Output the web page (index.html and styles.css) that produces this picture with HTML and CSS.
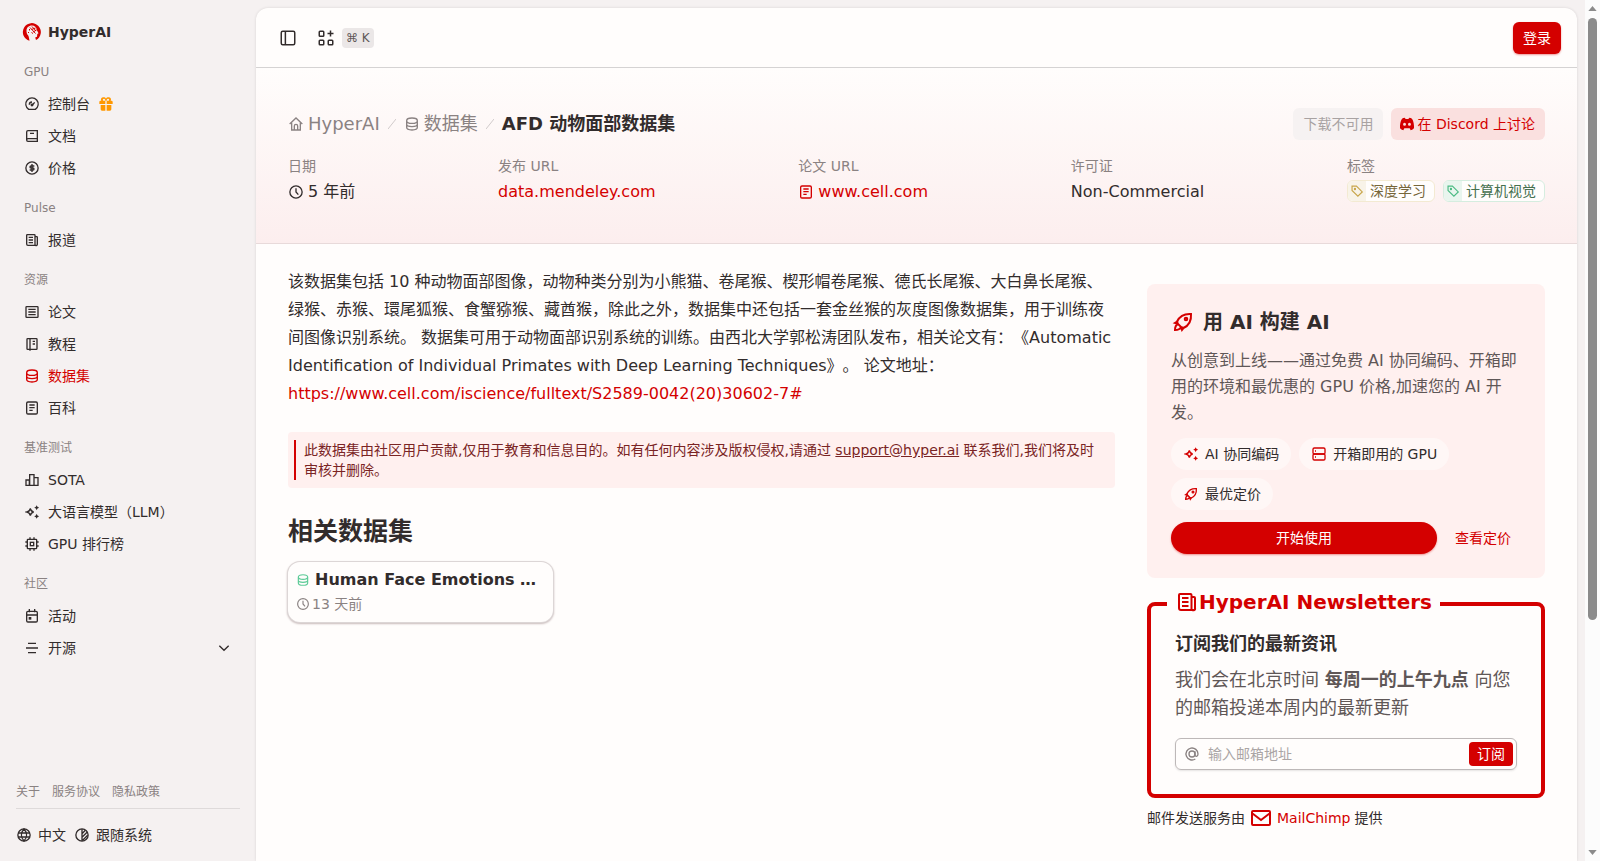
FILE: index.html
```html
<!DOCTYPE html>
<html lang="zh-CN">
<head>
<meta charset="utf-8">
<meta name="viewport" content="width=device-width, initial-scale=1">
<title>AFD 动物面部数据集</title>
<link rel="stylesheet" href="styles.css">
</head>
<body>
<svg class="sprite" aria-hidden="true">
  <symbol id="gauge" viewBox="0 0 24 24"><path d="M7 20h10a9.300 9.300 0 1 0-10 0z"/><path d="M12.500 13.500l3.500-4M8 13a4 4 0 0 1 4-4"/><circle cx="12" cy="13.500" r="1.200"/></symbol>
  <symbol id="book" viewBox="0 0 24 24"><path d="M4 6a2 2 0 0 1 2-2h14v16H6a2 2 0 0 1-2-2zM4 18a2 2 0 0 1 2-2h14M9 8h6"/></symbol>
  <symbol id="dollar" viewBox="0 0 24 24"><circle cx="12" cy="12" r="9.200"/><path d="M15.500 9H10.500a1.500 1.500 0 0 0 0 3h3a1.500 1.500 0 0 1 0 3H8.500M12 6v12"/></symbol>
  <symbol id="news" viewBox="0 0 24 24"><path d="M16.500 20V5a1 1 0 0 0-1-1H5a1 1 0 0 0-1 1v13a2 2 0 0 0 2 2h12.500M16.500 7H19a1 1 0 0 1 1 1v10a1.800 1.800 0 0 1-3.500 1M7 8h6.500M7 12h6.500M7 16h6.500"/></symbol>
  <symbol id="article" viewBox="0 0 24 24"><rect x="3" y="4" width="18" height="16" rx="1"/><path d="M6.500 8h11M6.500 12h11M6.500 16h11"/></symbol>
  <symbol id="notebook" viewBox="0 0 24 24"><rect x="4.500" y="4" width="15" height="16" rx="1"/><path d="M9 3v19M13 8h3.500M13 12h3.500"/></symbol>
  <symbol id="db" viewBox="0 0 24 24"><path d="M4 7c0-2.500 3-4 8-4s8 1.500 8 4-3 4-8 4-8-1.500-8-4v10c0 2.500 3 4 8 4s8-1.500 8-4V7M4 12.500c0 2 3 3.500 8 3.500s8-1.500 8-3.500"/></symbol>
  <symbol id="doc" viewBox="0 0 24 24"><rect x="4" y="3" width="16" height="18" rx="2"/><path d="M8 7.500h8M8 11.500h8M8 15.500h5"/></symbol>
  <symbol id="bars" viewBox="0 0 24 24"><path d="M3 12h5v8H3zM8.500 4h6.500v16H8.500zM15 8.500h6V20h-6z"/></symbol>
  <symbol id="spark" viewBox="0 0 24 24"><path d="M9.500 6.500c.8 3.800 2 5 5 5.500-3 .7-4.200 1.700-5 5.500-.8-3.800-2-4.800-5-5.500 3-.5 4.200-1.700 5-5.500z"/><path d="M2 12h3"/><path class="solid" d="M19 1.800l1.200 2.500L22.700 5.500l-2.500 1.200L19 9.200l-1.200-2.500-2.500-1.200 2.500-1.200zM19 14.800l1.200 2.500 2.500 1.200-2.500 1.200L19 22.200l-1.200-2.500-2.500-1.200 2.500-1.200z"/></symbol>
  <symbol id="chip" viewBox="0 0 24 24"><rect x="5" y="5" width="14" height="14" rx="1"/><rect x="9.500" y="9.500" width="5" height="5"/><path d="M9 2v3M15 2v3M9 19v3M15 19v3M2 9h3M2 15h3M19 9h3M19 15h3"/></symbol>
  <symbol id="calendar" viewBox="0 0 24 24"><rect x="4" y="5" width="16" height="16" rx="2"/><path d="M8 1.500v5M16 1.500v5M4 10.500h16"/><path class="solid" d="M7 13.500h4v4H7z"/></symbol>
  <symbol id="lines" viewBox="0 0 24 24"><path d="M6 5h12M3 12h18M6 19h12"/></symbol>
  <symbol id="chevron" viewBox="0 0 24 24"><path d="M5 8.500l7 7 7-7"/></symbol>
  <symbol id="globe" viewBox="0 0 24 24"><circle cx="12" cy="12" r="9.200"/><path d="M3 9h18M3 15h18M12 3c-5 5.500-5 12.500 0 18 5-5.500 5-12.500 0-18z"/></symbol>
  <symbol id="contrast" viewBox="0 0 24 24"><circle cx="12" cy="12" r="9.200"/><path d="M12 3v18M12 10l5-5M12 15.500l8-8M13 20l7.500-7.500"/></symbol>
  <symbol id="panel" viewBox="0 0 24 24"><rect x="3" y="3" width="18" height="18" rx="2"/><path d="M8.500 3v18"/></symbol>
  <symbol id="apps" viewBox="0 0 24 24"><rect x="3" y="3" width="6" height="6.500" rx="1"/><rect x="3" y="15" width="6" height="6" rx="1"/><rect x="15" y="15" width="6" height="6" rx="1"/><path d="M18 2v8M14 6h8"/></symbol>
  <symbol id="home" viewBox="0 0 24 24"><path d="M2.500 12L12 3l9.500 9M5.500 10v11h13V10M9.500 21v-6a2.500 2.500 0 0 1 5 0v6"/></symbol>
  <symbol id="clock" viewBox="0 0 24 24"><circle cx="12" cy="12" r="9.200"/><path d="M12 6.500V12l3.500 4"/></symbol>
  <symbol id="tag" viewBox="0 0 24 24"><path d="M3.500 3.500H11L21 13.500 13.500 21 3.500 11z"/><circle cx="8.500" cy="8.500" r="1"/></symbol>
  <symbol id="rocket" viewBox="0 0 24 24"><path d="M6 11.500C9 5.500 13 3.500 20 4c.5 7-2 11.500-7.500 14l-2.500-1-3-3zM7 11l-3 2 3.500 1M13 17.500L11 20l-1-3M7 14c-2.500 1-3 3.500-3 6 2.500 0 5-.5 6-3"/><circle cx="15" cy="9" r="1.300"/></symbol>
  <symbol id="server" viewBox="0 0 24 24"><rect x="3" y="3" width="18" height="9" rx="2"/><rect x="3" y="12" width="18" height="9" rx="2"/><path d="M6 7.500h1.500M6 16.500h1.500"/></symbol>
  <symbol id="at" viewBox="0 0 24 24"><circle cx="12" cy="12" r="4.500"/><path d="M16.500 8v5.500c0 3 4.500 3 4.500-1.500a9 9 0 1 0-4 7.500"/></symbol>
  <symbol id="mail" viewBox="0 0 24 24"><rect x="3" y="5" width="18" height="14" rx="1"/><path d="M3.500 7.500L12 14l8.500-6.500"/></symbol>
  <symbol id="gift" viewBox="0 0 24 24"><path d="M11 13.500V22H6a2 2 0 0 1-2-2v-6.500zM20 13.500V20a2 2 0 0 1-2 2h-5v-8.500zM2 9a2 2 0 0 1 2-2h1C3.500 4.500 5.500 2 8.500 2 10 2 11.300 2.800 12 4c.7-1.200 2-2 3.500-2 3 0 5 2.500 3.500 5h1a2 2 0 0 1 2 2v3H13V7h2.500C17.500 7 17 4 15 4c-1.500 0-2 1.500-2 3h-2c0-1.500-.5-3-2-3-2 0-2.500 3-.5 3H11v5H2z"/></symbol>
  <symbol id="discord" viewBox="0 0 24 24"><path fill-rule="evenodd" d="M4.500 4C6 3 7 2.500 8.500 2.500l1.500 2h4l1.500-2c1.500 0 2.500.5 4 1.500 2.500 4 3.300 9 3 14.500-2 2-3.500 2.700-5 3l-1.500-3h-8l-1.500 3c-1.500-.3-3-1-5-3C1.200 13 2 8 4.500 4zM8.300 10a2.200 2.300 0 1 0 0 4.600 2.200 2.300 0 0 0 0-4.600zm7.400 0a2.200 2.300 0 1 0 0 4.600 2.200 2.300 0 0 0 0-4.600z"/></symbol>
  <symbol id="slash" viewBox="0 0 8 12"><path d="M0 11L8 1"/></symbol>
  <symbol id="logo" viewBox="0 0 20 20"><path class="solid" d="M7.500 18.800A9 9 0 1 1 14 18.100l-.8-2.600 1.800-.8.300-2.700 1.200-.8-1.700-3.200C14.500 5 12.500 3.500 10 3.500 6.500 3.500 4.500 6 4.500 8.500c0 2 .5 3.500 1.300 4.500.9 1 1.200 2.500 1.700 5.800z"/><path d="M8 5.500l5.500 6M10 4.500l4 4.500M13.500 6l-4 1.500M14.500 8l-3.500 2M7.500 7v1.500M6 10.500h1M9.500 10.500l1.500 1"/></symbol>
</svg>

<div class="app">
  <aside class="sidebar">
    <a class="brand" href="#"><svg class="logo"><use href="#logo"/></svg>HyperAI</a>
    <nav class="nav">
      <section class="group">
        <h2 class="group-title">GPU</h2>
        <a class="item" href="#"><svg class="icon"><use href="#gauge"/></svg>控制台<svg class="icon gift"><use href="#gift"/></svg></a>
        <a class="item" href="#"><svg class="icon"><use href="#book"/></svg>文档</a>
        <a class="item" href="#"><svg class="icon"><use href="#dollar"/></svg>价格</a>
      </section>
      <section class="group">
        <h2 class="group-title">Pulse</h2>
        <a class="item" href="#"><svg class="icon"><use href="#news"/></svg>报道</a>
      </section>
      <section class="group">
        <h2 class="group-title">资源</h2>
        <a class="item" href="#"><svg class="icon"><use href="#article"/></svg>论文</a>
        <a class="item" href="#"><svg class="icon"><use href="#notebook"/></svg>教程</a>
        <a class="item active" href="#"><svg class="icon"><use href="#db"/></svg>数据集</a>
        <a class="item" href="#"><svg class="icon"><use href="#doc"/></svg>百科</a>
      </section>
      <section class="group">
        <h2 class="group-title">基准测试</h2>
        <a class="item" href="#"><svg class="icon"><use href="#bars"/></svg>SOTA</a>
        <a class="item" href="#"><svg class="icon"><use href="#spark"/></svg>大语言模型（LLM）</a>
        <a class="item" href="#"><svg class="icon"><use href="#chip"/></svg>GPU 排行榜</a>
      </section>
      <section class="group">
        <h2 class="group-title">社区</h2>
        <a class="item" href="#"><svg class="icon"><use href="#calendar"/></svg>活动</a>
        <button class="item" type="button"><svg class="icon"><use href="#lines"/></svg>开源<svg class="icon push"><use href="#chevron"/></svg></button>
      </section>
    </nav>
    <footer class="side-foot">
      <div class="legal"><a href="#">关于</a><a href="#">服务协议</a><a href="#">隐私政策</a></div>
      <div class="prefs">
        <button class="pref" type="button"><svg class="icon"><use href="#globe"/></svg>中文</button>
        <button class="pref" type="button"><svg class="icon"><use href="#contrast"/></svg>跟随系统</button>
      </div>
    </footer>
  </aside>

  <main class="main">
    <header class="topbar">
      <button class="tool" type="button" aria-label="侧边栏"><svg class="icon icon-m"><use href="#panel"/></svg></button>
      <button class="tool" type="button" aria-label="搜索"><svg class="icon icon-m"><use href="#apps"/></svg><kbd class="kbd">⌘ K</kbd></button>
      <button class="btn primary push" type="button">登录</button>
    </header>

    <section class="hero">
      <div class="hero-top">
        <nav class="crumbs">
          <a class="crumb" href="#"><svg class="icon"><use href="#home"/></svg>HyperAI</a>
          <svg class="slash"><use href="#slash"/></svg>
          <a class="crumb" href="#"><svg class="icon"><use href="#db"/></svg>数据集</a>
          <svg class="slash"><use href="#slash"/></svg>
          <h1 class="title">AFD 动物面部数据集</h1>
        </nav>
        <div class="actions">
          <button class="btn muted" type="button" disabled>下载不可用</button>
          <a class="btn discord" href="#"><svg class="icon fill"><use href="#discord"/></svg>在 Discord 上讨论</a>
        </div>
      </div>
      <dl class="meta">
        <div><dt>日期</dt><dd><svg class="icon"><use href="#clock"/></svg>5 年前</dd></div>
        <div><dt>发布 URL</dt><dd><a href="#">data.mendeley.com</a></dd></div>
        <div><dt>论文 URL</dt><dd class="red"><svg class="icon"><use href="#doc"/></svg><a href="#">www.cell.com</a></dd></div>
        <div><dt>许可证</dt><dd>Non-Commercial</dd></div>
        <div><dt>标签</dt><dd class="tags">
          <a class="tag gold" href="#"><span class="tag-icon"><svg class="icon icon-s"><use href="#tag"/></svg></span>深度学习</a>
          <a class="tag green" href="#"><span class="tag-icon"><svg class="icon icon-s"><use href="#tag"/></svg></span>计算机视觉</a>
        </dd></div>
      </dl>
    </section>

    <div class="content">
      <article class="article">
        <p class="desc">该数据集包括 10 种动物面部图像，动物种类分别为小熊猫、卷尾猴、楔形帽卷尾猴、德氏长尾猴、大白鼻长尾猴、绿猴、赤猴、環尾狐猴、食蟹猕猴、藏酋猴，除此之外，数据集中还包括一套金丝猴的灰度图像数据集，用于训练夜间图像识别系统。 数据集可用于动物面部识别系统的训练。由西北大学郭松涛团队发布，相关论文有：《Automatic Identification of Individual Primates with Deep Learning Techniques》。 论文地址：<a class="url" href="#">https://www.cell.com/iscience/fulltext/S2589-0042(20)30602-7#</a></p>
        <aside class="notice"><p>此数据集由社区用户贡献,仅用于教育和信息目的。如有任何内容涉及版权侵权,请通过 <a href="#">support@hyper.ai</a> 联系我们,我们将及时审核并删除。</p></aside>
        <h2 class="related">相关数据集</h2>
        <div class="cards">
          <a class="card" href="#">
            <h3 class="card-title"><svg class="icon icon-s"><use href="#db"/></svg><span>Human Face Emotions …</span></h3>
            <div class="card-date"><svg class="icon icon-s"><use href="#clock"/></svg>13 天前</div>
          </a>
        </div>
      </article>

      <aside class="rail">
        <section class="promo">
          <h2 class="promo-title"><svg class="icon icon-l"><use href="#rocket"/></svg>用 AI 构建 AI</h2>
          <p class="promo-text">从创意到上线——通过免费 AI 协同编码、开箱即用的环境和最优惠的 GPU 价格,加速您的 AI 开发。</p>
          <ul class="chips">
            <li><svg class="icon"><use href="#spark"/></svg>AI 协同编码</li>
            <li><svg class="icon"><use href="#server"/></svg>开箱即用的 GPU</li>
            <li><svg class="icon"><use href="#rocket"/></svg>最优定价</li>
          </ul>
          <div class="promo-actions">
            <button class="btn primary pill" type="button">开始使用</button>
            <a class="btn text" href="#">查看定价</a>
          </div>
        </section>
        <form class="news">
          <fieldset class="news-box">
            <legend class="legend"><svg class="icon icon-l"><use href="#news"/></svg>HyperAI Newsletters</legend>
            <h3 class="news-title">订阅我们的最新资讯</h3>
            <p class="news-text">我们会在北京时间 <b>每周一的上午九点</b> 向您的邮箱投递本周内的最新更新</p>
            <label class="field"><svg class="icon"><use href="#at"/></svg><input type="email" placeholder="输入邮箱地址" aria-label="邮箱地址"><button class="subscribe" type="submit">订阅</button></label>
          </fieldset>
          <p class="provider">邮件发送服务由 <a href="#"><svg class="icon icon-l"><use href="#mail"/></svg>MailChimp</a> 提供</p>
        </form>
      </aside>
    </div>
  </main>

  <div class="scroll" aria-hidden="true">
    <svg class="arrow" viewBox="0 0 10 6"><path d="M0 6L5 0l5 6z"/></svg>
    <div class="track"><div class="thumb"></div></div>
    <svg class="arrow" viewBox="0 0 10 6"><path d="M0 0l5 6 5-6z"/></svg>
  </div>
</div>
</body>
</html>
```
FILE: styles.css
```css
:root {
  --red: #d40000;
  --ink: #322c2c;
  --soft: #5f5757;
  --gray: #8a8282;
  --page: #f5f1f1;
  --paper: #fffdfc;
  --blush: #fff0ef;
}
* { box-sizing: border-box; }
body, h1, h2, h3, p, dl, dd, ul { margin: 0; padding: 0; }
body {
  background: var(--page);
  color: var(--ink);
  font: 14px/20px "DejaVu Sans", "Noto Sans CJK SC", sans-serif;
  text-spacing-trim: space-all;
}
a { color: inherit; text-decoration: none; }
button { font: inherit; color: inherit; background: none; border: 0; padding: 0; cursor: pointer; }
.sprite { position: absolute; width: 0; height: 0; }
.icon { width: 16px; height: 16px; flex: none; }
.icon-s { width: 14px; height: 14px; }
.icon-m { width: 18px; height: 18px; }
.icon-l { width: 24px; height: 24px; }
svg { fill: none; stroke: currentColor; stroke-width: 2; }
.solid { fill: currentColor; stroke: none; }
.fill, .gift { fill: currentColor; stroke: none; }
.push { margin-left: auto; }

.app { display: flex; height: 100vh; overflow: hidden; }
.sidebar { width: 256px; flex: none; display: flex; flex-direction: column; padding: 16px; }
.brand { display: flex; align-items: center; gap: 6px; height: 32px; padding-left: 6px; font-weight: bold; }
.logo { width: 20px; height: 20px; color: var(--red); stroke-width: 1; }
.nav { display: flex; flex-direction: column; gap: 8px; padding-top: 8px; }
.group { display: flex; flex-direction: column; }
.group-title { font-size: 12px; font-weight: normal; line-height: 32px; color: var(--gray); padding: 0 8px; }
.item { display: flex; align-items: center; gap: 8px; height: 32px; padding: 0 8px; text-align: left; }
.active { color: var(--red); }
.gift { color: #ff9800; }
.side-foot { margin-top: auto; }
.legal { display: flex; gap: 12px; padding-bottom: 6px; border-bottom: 1px solid #dedada; font-size: 12px; color: var(--gray); }
.prefs { display: flex; gap: 8px; padding-top: 16px; }
.pref { display: flex; align-items: center; gap: 6px; }

.main { flex: 1; min-width: 0; margin: 8px 8px 0 0; background: var(--paper); border-radius: 12px 12px 0 0; box-shadow: 0 0 3px #0000001f; overflow: hidden; }
.topbar { display: flex; align-items: center; gap: 20px; height: 60px; padding: 0 16px 0 23px; border-bottom: 1px solid #d5d3d3; }
.tool { display: flex; align-items: center; gap: 7px; }
.kbd { padding: 0 4px; border-radius: 4px; background: #ebe7e7; color: var(--soft); font: 12px/20px "DejaVu Sans", sans-serif; }
.btn { display: flex; align-items: center; justify-content: center; gap: 2px; height: 32px; padding: 0 10px; border-radius: 6px; white-space: nowrap; }
.primary { background: var(--red); color: #fff; box-shadow: 0 1px 2px #d4000066; }
.muted { background: #f6f2f2; color: #a8a2a2; }
.discord { background: #fae0df; color: var(--red); padding-left: 8px; }
.text { color: var(--red); }
.pill { flex: 1; border-radius: 16px; }

.hero { padding: 40px 32px 38px; background: linear-gradient(#fffdfc, #fceeee); border-bottom: 1px solid #e8dada; }
.hero-top { display: flex; justify-content: space-between; align-items: center; }
.crumbs { display: flex; align-items: center; gap: 8px; font-size: 18px; line-height: 28px; color: var(--gray); }
.crumb { display: flex; align-items: center; gap: 4px; }
.slash { width: 8px; height: 12px; color: #d0caca; stroke-width: 1; }
.title { font-size: 18px; color: var(--ink); }
.actions { display: flex; gap: 8px; }
.meta { display: flex; justify-content: space-between; padding-top: 16px; }
.meta dt { color: var(--gray); }
.meta dd { display: flex; align-items: center; gap: 4px; min-height: 24px; margin-top: 3px; font-size: 16px; line-height: 26px; }
.meta a, .red { color: var(--red); }
.meta .tags { gap: 8px; }
.tags .tag { display: flex; height: 22px; padding-right: 8px; border: 1px solid; border-radius: 6px; overflow: hidden; background: var(--paper); font-size: 14px; line-height: 20px; }
.tag-icon { display: grid; place-items: center; width: 18px; margin-right: 4px; }
.tags .gold { color: #76663a; border-color: #f3ead2; }
.gold .tag-icon { background: #f8f3e8; color: #c8a54a; }
.tags .green { color: #46704f; border-color: #d5eddf; }
.green .tag-icon { background: #e9f5ee; color: #4dbb84; }

.content { display: grid; grid-template-columns: minmax(0, 1fr) 398px; gap: 32px; padding: 24px 32px 40px; }
.desc { font-size: 16px; line-height: 28px; }
.url { color: var(--red); display: block; }
.notice { margin-top: 24px; padding: 8px 6px; background: var(--blush); border-radius: 4px; color: #7a2424; }
.notice p { padding: 0 8px; border-left: 2px solid var(--red); }
.notice a { text-decoration: underline; }
.related { margin: 28px 0 14px; font-size: 25px; line-height: 32px; }
.cards { display: grid; grid-template-columns: repeat(3, minmax(0, 1fr)); gap: 16px; }
.card { padding: 6px 8px; border-radius: 12px; box-shadow: 0 0 0 1px #dcd6d6, 0 1px 2px 1px #c9bcbc; background: var(--paper); line-height: 24px; }
.card-title { display: flex; align-items: center; gap: 5px; font-size: 16px; }
.card-title span { overflow: hidden; text-overflow: ellipsis; white-space: nowrap; }
.card-title .icon { color: #5ecb98; }
.card-date { display: flex; align-items: center; gap: 2px; color: var(--gray); }

.rail { padding-top: 16px; }
.promo { display: flex; flex-direction: column; gap: 12px; padding: 24px; border-radius: 8px; background: var(--blush); }
.promo-title { display: flex; align-items: center; gap: 8px; font-size: 20px; line-height: 28px; }
.promo .icon { color: var(--red); }
.promo-text { font-size: 16px; line-height: 26px; color: var(--soft); }
.chips { display: flex; flex-wrap: wrap; gap: 8px; list-style: none; }
.chips li { display: flex; align-items: center; gap: 6px; height: 32px; padding: 0 12px; border-radius: 16px; background: #fff7f6; }
.promo-actions { display: flex; gap: 8px; }
.news { padding-top: 10px; }
.news-box { margin: 0; min-width: 0; padding: 10px 24px 24px; border: 4px solid var(--red); border-radius: 8px; }
.legend { display: flex; align-items: center; margin-left: -8px; padding: 0 8px 4px; color: var(--red); font-size: 20px; line-height: 28px; font-weight: bold; }
.news-title { font-size: 18px; line-height: 28px; }
.news-text { margin: 8px 0 16px; font-size: 18px; line-height: 28px; color: var(--soft); }
.field { display: flex; align-items: center; gap: 8px; height: 32px; padding: 0 3px 0 8px; border: 1px solid #bdb8b8; border-radius: 6px; box-shadow: 0 1px 2px #0000001a; color: var(--gray); }
.field input { flex: 1; min-width: 0; border: 0; padding: 0; background: none; outline: 0; font: inherit; color: var(--ink); }
.field input::placeholder { color: #aaa5a5; }
.subscribe { height: 24px; padding: 0 8px; border-radius: 4px; background: var(--red); color: #fff; }
.provider { display: flex; align-items: center; gap: 4px; margin-top: 8px; line-height: 24px; }
.provider a { display: flex; align-items: center; gap: 4px; color: var(--red); }

.scroll { width: 15px; flex: none; display: flex; flex-direction: column; align-items: center; gap: 7px; padding: 6px 0; background: #fcfcfc; }
.arrow { width: 9px; height: 5px; fill: #8b8b8b; stroke: none; }
.track { flex: 1; }
.thumb { width: 9px; height: 73%; border-radius: 5px; background: #8b8b8b; }
```
